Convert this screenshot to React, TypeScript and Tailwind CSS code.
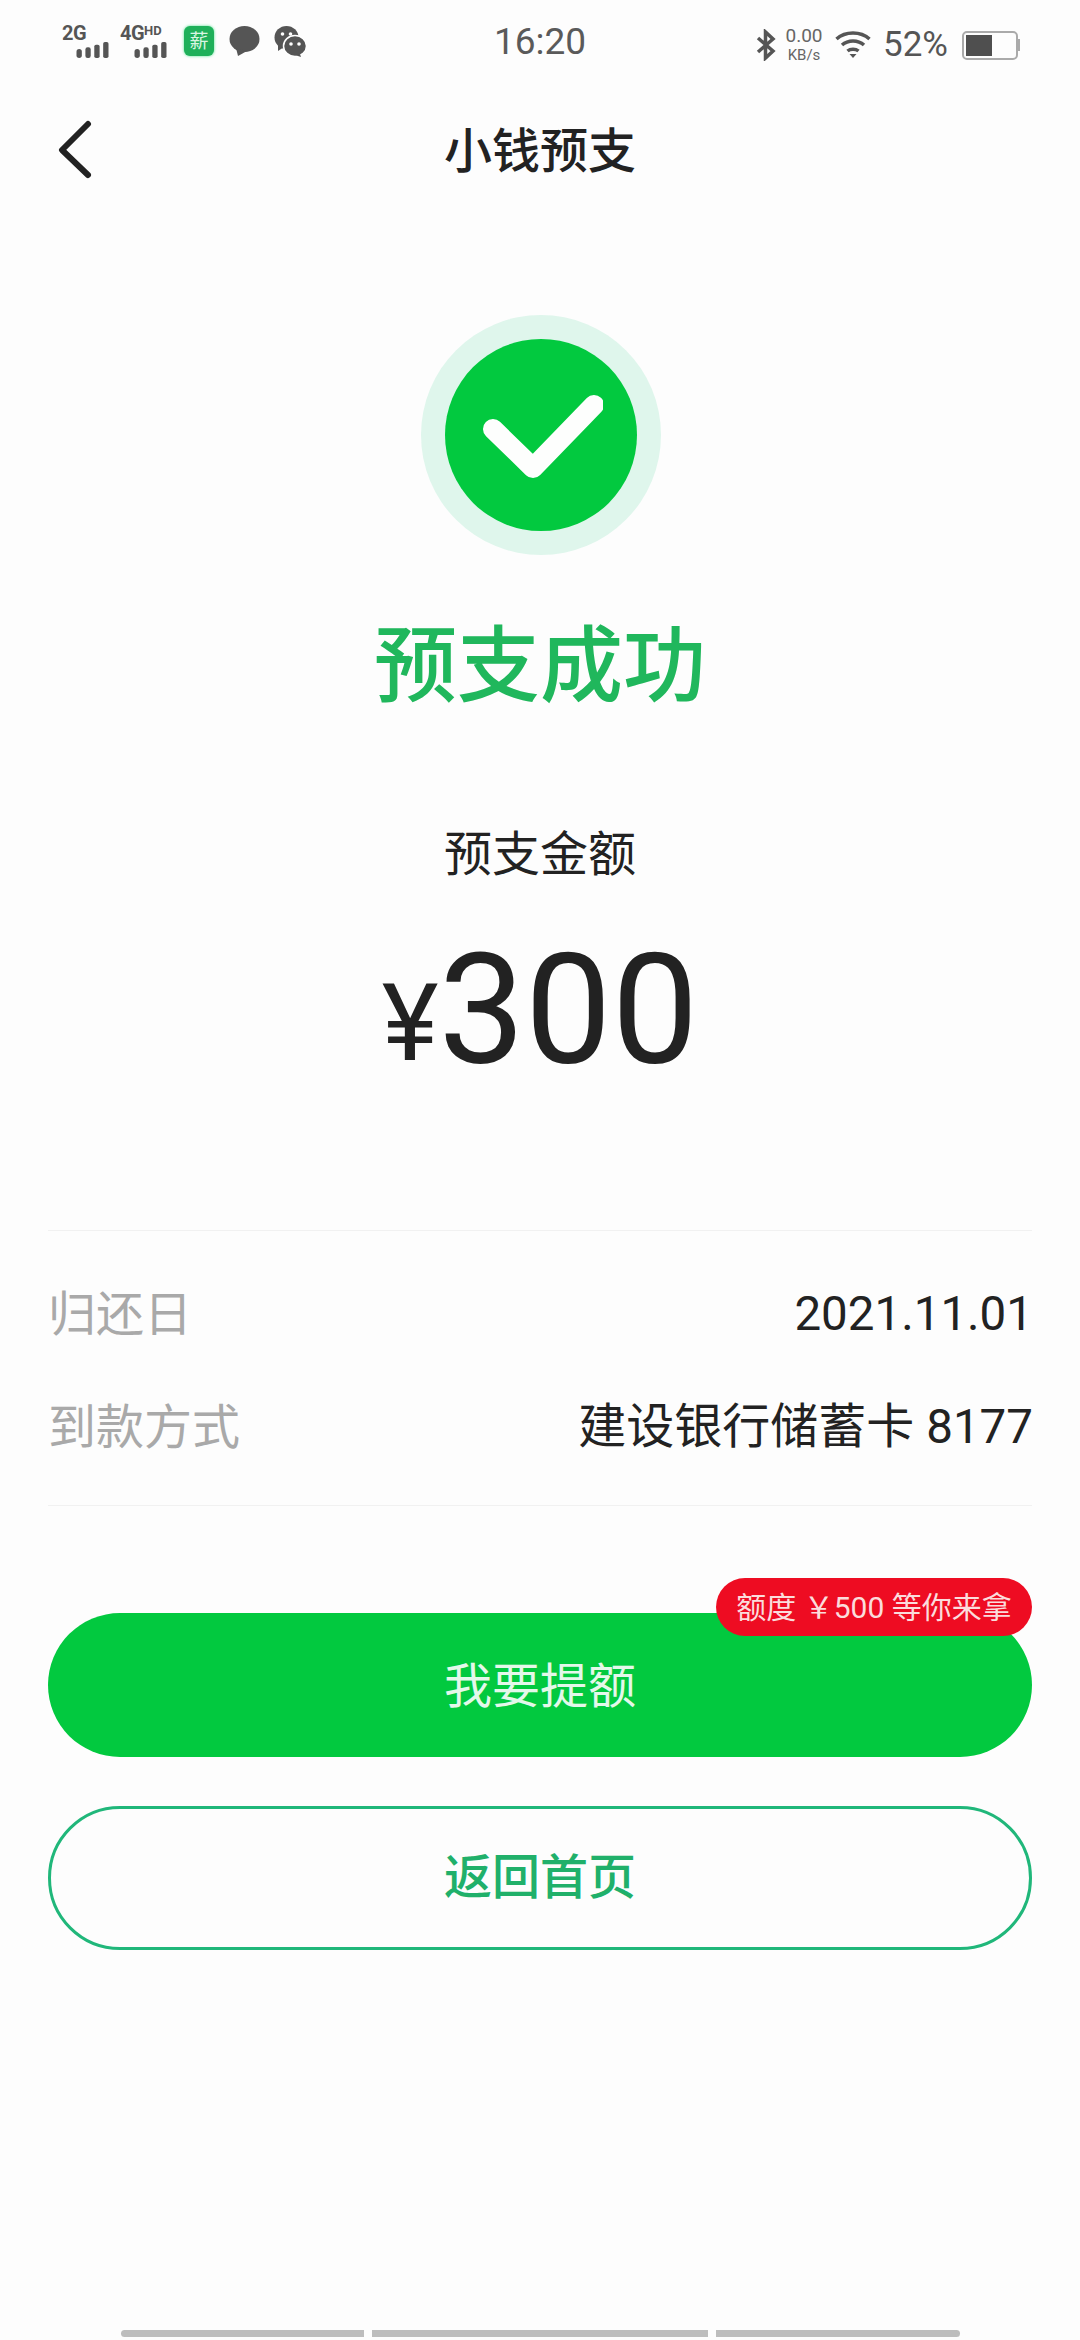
import React from 'react';

const SANS = 'font-["Roboto","Noto_Sans_CJK_SC",sans-serif]';

const SignalBars = () => (
  <svg width="35" height="16" viewBox="0 0 36 18" fill="#555">
    <rect x="0" y="8" width="6" height="10" rx="3" />
    <rect x="10" y="6" width="6" height="12" rx="2.5" />
    <rect x="20" y="3" width="6" height="15" rx="2" />
    <rect x="30" y="0" width="6" height="18" rx="2" />
  </svg>
);

const Network = ({ label, hd }: { label: string; hd?: boolean }) => (
  <div className="flex h-[32px] w-[48px] flex-col">
    <div className="flex h-[16px] items-start font-bold leading-[17px] text-[#555]">
      <span className="text-[20px] tracking-[-0.5px]">{label}</span>
      {hd && <span className="text-[13px] leading-[11px]">HD</span>}
    </div>
    <div className="mt-[1px] flex justify-end">
      <SignalBars />
    </div>
  </div>
);

const StatusBar = () => (
  <div className="flex h-[72px] items-start pl-[62px] pr-[60px] pt-[25px] text-[#555]">
    <div className="flex w-[430px] items-center">
      <Network label="2G" />
      <div className="ml-[10px]">
        <Network label="4G" hd />
      </div>
      <div className="ml-[16px] flex h-[30px] w-[30px] items-center justify-center rounded-[6px] bg-[#1fb05a] text-[19px] leading-none text-[#d8f5e2] shadow-[0_0_3px_#4be08a]">
        薪
      </div>
      <svg className="ml-[15px]" width="31" height="30" viewBox="0 0 31 30" fill="#555">
        <ellipse cx="15.500" cy="13" rx="15" ry="13" />
        <path d="M7 22 L9 30 L18 25 Z" />
      </svg>
      <svg className="ml-[14px]" width="32" height="31" viewBox="0 0 32 31">
        <ellipse cx="12.500" cy="11.500" rx="12" ry="11.500" fill="#555" />
        <path d="M4 19 L4 25 L10 21 Z" fill="#555" />
        <circle cx="8.500" cy="8" r="1.800" fill="#fff" />
        <circle cx="16.500" cy="8" r="1.800" fill="#fff" />
        <ellipse cx="21" cy="20" rx="11.500" ry="10.500" fill="#555" stroke="#fff" strokeWidth="1.500" />
        <path d="M26 28 L27 31 L21 29 Z" fill="#555" />
        <circle cx="17" cy="18" r="1.800" fill="#fff" />
        <circle cx="25" cy="18" r="1.800" fill="#fff" />
      </svg>
    </div>
    <div className="mt-[-3px] w-[96px] whitespace-nowrap text-center text-[37px] leading-[40px] text-[#5a5a5a]">16:20</div>
    <div className="ml-auto flex items-center">
      <svg width="20" height="32" viewBox="0 0 20 30" fill="none" stroke="#555" strokeWidth="3.500">
        <path d="M2 8 L17 21 L9.500 28 L9.500 2 L17 9 L2 22" />
      </svg>
      <div className="ml-[8px] flex w-[40px] flex-col items-center text-[#666]">
        <span className="text-[19px] leading-[21px]">0.00</span>
        <span className="text-[15px] leading-[19px]">KB/s</span>
      </div>
      <svg className="ml-[11px]" width="36" height="28" viewBox="0 0 36 28" fill="none" stroke="#555" strokeWidth="3.500">
        <path d="M1.500 8 C10.500 0 25.500 0 34.500 8" />
        <path d="M7 14 C13 8.500 23 8.500 29 14" />
        <path d="M12.500 20 C15.500 17.500 20.500 17.500 23.500 20" />
        <path d="M18 27 L14.500 23 L21.500 23 Z" fill="#555" stroke="none" />
      </svg>
      <span className="ml-[12px] text-[35px] leading-[40px] text-[#555]">52%</span>
      <div className="ml-[14px] flex items-center">
        <div className="h-[29px] w-[56px] rounded-[5px] border-[2px] border-[#aaa] p-[2px]">
          <div className="h-full w-[26px] bg-[#4f4f4f]" />
        </div>
        <div className="h-[12px] w-[2px] bg-[#aaa]" />
      </div>
    </div>
  </div>
);

const Header = () => (
  <div className="relative flex h-[160px] items-center justify-center">
    <svg className="absolute left-[58px] top-[48px]" width="34" height="60" viewBox="0 0 34 60" fill="none" stroke="#222" strokeWidth="6" strokeLinecap="round" strokeLinejoin="round">
      <path d="M30 4 L4 30 L30 55" />
    </svg>
    <span className="text-[48px] font-medium leading-none text-[#222]">小钱预支</span>
  </div>
);

const SuccessIcon = () => (
  <div className="ml-[2px] flex h-[240px] w-[240px] items-center justify-center rounded-full bg-[#dff6ec]">
    <div className="flex h-[192px] w-[192px] items-center justify-center rounded-full bg-[#02c93f]">
      <svg width="124" height="92" viewBox="0 0 124 92" fill="none" stroke="#fdfefd" strokeWidth="20" strokeLinecap="round" strokeLinejoin="round">
        <path d="M14 40 L54 79 L115 16" />
      </svg>
    </div>
  </div>
);

const InfoRow = ({ label, children }: { label: string; children: React.ReactNode }) => (
  <div className="flex h-[113px] items-center justify-between">
    <span className="text-[48px] text-[#a9a9a9]">{label}</span>
    <span className="mr-[-1px] text-[#222]">{children}</span>
  </div>
);

export default function App() {
  return (
    <div className={`flex h-[2340px] w-[1080px] flex-col overflow-hidden bg-[#fdfdfd] ${SANS}`}>
      <StatusBar />
      <Header />

      <div className="mt-[83px] flex flex-col items-center">
        <SuccessIcon />
        <h1 className="mt-[62px] text-[83px] font-medium leading-[100px] text-[#20b75c]">预支成功</h1>
        <p className="mt-[108px] text-[48px] leading-[60px] text-[#222]">预支金额</p>
        <div className="mt-[46px] flex h-[160px] items-center text-[#222]">
          <span className="mt-[24px] text-[108px] leading-none">¥</span>
          <span className="text-[154px] leading-none">300</span>
        </div>
      </div>

      <div className="mx-[48px] mt-[139px] border-y border-[#f1f1f1] pt-[27px] pb-[21px]">
        <InfoRow label="归还日">
          <span className="text-[47.500px]">2021.11.01</span>
        </InfoRow>
        <InfoRow label="到款方式">
          <span className="text-[48px]">建设银行储蓄卡 </span>
          <span className="text-[47.500px]">8177</span>
        </InfoRow>
      </div>

      <div className="relative mx-[48px] mt-[107px] flex flex-col gap-[49px]">
        <button className="flex h-[144px] items-center justify-center rounded-[72px] bg-[#02c93f] pt-[3px] text-[48px] text-[#e4f8ea]">
          我要提额
        </button>
        <button className="flex h-[144px] items-center justify-center rounded-[72px] border-[3px] border-[#20b77a] text-[48px] font-medium text-[#20b06a]">
          返回首页
        </button>
        <div className="absolute right-0 top-[-35px] flex h-[58px] w-[316px] items-center justify-center rounded-[29px] bg-[#ee0c22] text-[30px] text-[#fbdcdc]">
          额度 ￥500 等你来拿
        </div>
      </div>

      <div className="mt-auto mb-[3px] flex justify-center gap-[8px]">
        <div className="h-[7px] w-[243px] rounded-l-[4px] bg-[#bdbdbd]" />
        <div className="h-[7px] w-[336px] bg-[#bdbdbd]" />
        <div className="h-[7px] w-[244px] rounded-r-[4px] bg-[#bdbdbd]" />
      </div>
    </div>
  );
}
